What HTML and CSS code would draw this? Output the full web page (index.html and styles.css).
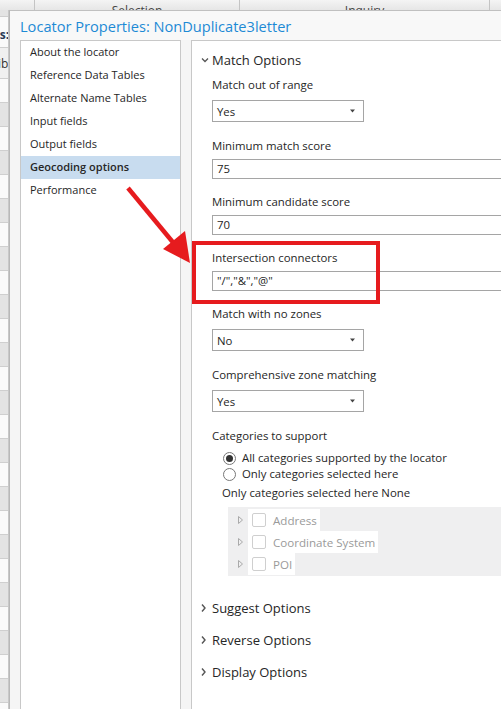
FILE: index.html
```html
<!DOCTYPE html>
<html>
<head>
<meta charset="utf-8">
<link rel="stylesheet" href="styles.css">
</head>
<body>
<div class="screen">
  <div class="topbar">
    <div class="th th-a"></div>
    <div class="th th-sel"><span>Selection</span></div>
    <div class="th th-inq"><span>Inquiry</span></div>
    <div class="th th-end"></div>
  </div>
  <div class="leftstrip">
    <div class="ls-cell ls-grey"></div>
    <div class="ls-cell ls-tall"><span class="ls-text">ls:</span></div>
    <div class="ls-cell ls-tall ls-light"><span class="ls-text2">ib</span></div>
    <div class="ls-rows"></div>
  </div>
  <div class="dialog">
    <div class="title">Locator Properties: NonDuplicate3letter</div>
    <div class="dlg-body">
      <nav class="nav">
        <div class="nav-item">About the locator</div>
        <div class="nav-item">Reference Data Tables</div>
        <div class="nav-item">Alternate Name Tables</div>
        <div class="nav-item">Input fields</div>
        <div class="nav-item">Output fields</div>
        <div class="nav-item active">Geocoding options</div>
        <div class="nav-item">Performance</div>
      </nav>
      <div class="panel">
        <div class="sec-head open">
          <svg class="chev-down" width="11" height="8" viewBox="0 0 11 8"><polyline points="1,2.5 4,5.5 7,2.5" fill="none" stroke="#555" stroke-width="1.3"/></svg>
          <span>Match Options</span>
        </div>
        <div class="fields">
          <div class="label">Match out of range</div>
          <div class="select"><span>Yes</span><svg width="6" height="4" viewBox="0 0 6 4"><polygon points="0,0.5 5,0.5 2.5,3.5" fill="#444"/></svg></div>

          <div class="label">Minimum match score</div>
          <div class="input">75</div>

          <div class="label">Minimum candidate score</div>
          <div class="input">70</div>

          <div class="label">Intersection connectors</div>
          <div class="input">"/","&amp;","@"</div>

          <div class="label">Match with no zones</div>
          <div class="select"><span>No</span><svg width="6" height="4" viewBox="0 0 6 4"><polygon points="0,0.5 5,0.5 2.5,3.5" fill="#444"/></svg></div>

          <div class="label">Comprehensive zone matching</div>
          <div class="select"><span>Yes</span><svg width="6" height="4" viewBox="0 0 6 4"><polygon points="0,0.5 5,0.5 2.5,3.5" fill="#444"/></svg></div>

          <div class="label">Categories to support</div>
          <div class="radios">
            <div class="radio-row"><span class="radio checked"></span><span>All categories supported by the locator</span></div>
            <div class="radio-row"><span class="radio"></span><span>Only categories selected here</span></div>
          </div>
          <div class="none-label">Only categories selected here None</div>
          <div class="tree">
            <div class="tree-row">
              <svg class="tri" width="20" height="10" viewBox="0 0 20 10"><polygon points="10.5,1.5 14.5,5 10.5,8.5" fill="none" stroke="#aaa" stroke-width="1"/></svg>
              <span class="tree-item"><span class="check"></span><span>Address</span></span>
            </div>
            <div class="tree-row">
              <svg class="tri" width="20" height="10" viewBox="0 0 20 10"><polygon points="10.5,1.5 14.5,5 10.5,8.5" fill="none" stroke="#aaa" stroke-width="1"/></svg>
              <span class="tree-item"><span class="check"></span><span>Coordinate System</span></span>
            </div>
            <div class="tree-row">
              <svg class="tri" width="20" height="10" viewBox="0 0 20 10"><polygon points="10.5,1.5 14.5,5 10.5,8.5" fill="none" stroke="#aaa" stroke-width="1"/></svg>
              <span class="tree-item"><span class="check"></span><span>POI</span></span>
            </div>
          </div>
        </div>
        <div class="collapsed">
          <div class="sec-head closed">
            <svg width="11" height="10" viewBox="0 0 11 10"><polyline points="1,1.5 4,5 1,8.5" fill="none" stroke="#555" stroke-width="1.4"/></svg>
            <span>Suggest Options</span>
          </div>
          <div class="sec-head closed">
            <svg width="11" height="10" viewBox="0 0 11 10"><polyline points="1,1.5 4,5 1,8.5" fill="none" stroke="#555" stroke-width="1.4"/></svg>
            <span>Reverse Options</span>
          </div>
          <div class="sec-head closed">
            <svg width="11" height="10" viewBox="0 0 11 10"><polyline points="1,1.5 4,5 1,8.5" fill="none" stroke="#555" stroke-width="1.4"/></svg>
            <span>Display Options</span>
          </div>
        </div>
      </div>
    </div>
  </div>
</div>
<svg class="annot" width="501" height="709" viewBox="0 0 501 709">
  <rect x="194" y="243" width="184" height="59" fill="none" stroke="#e61b1e" stroke-width="4"/>
  <line x1="128" y1="188" x2="176" y2="246" stroke="#e61b1e" stroke-width="4.5"/>
  <polygon points="163,249 185,231 190,263" fill="#e61b1e"/>
</svg>
</body>
</html>
```
FILE: styles.css
```css
* { box-sizing: border-box; }
html, body { margin: 0; padding: 0; }
body {
  width: 501px;
  height: 709px;
  overflow: hidden;
  background: #f3f3f3;
  font-family: "Open Sans", "Noto Sans", sans-serif;
  color: #262626;
  position: relative;
}
.screen {
  display: grid;
  grid-template-columns: 9px 492px;
  grid-template-rows: 10px 699px;
  height: 709px;
}
.topbar {
  grid-column: 1 / 3;
  display: flex;
  background: linear-gradient(#f4f4f4, #e6e6e6);
  overflow: hidden;
}
.th {
  border-right: 1px solid #c4c4c4;
  font-size: 12px;
  color: #444;
  overflow: hidden;
  display: flex;
  justify-content: center;
}
.th span { line-height: 12px; margin-top: 5px; }
.th-a { width: 35px; }
.th-sel { width: 205px; }
.th-inq { width: 250px; }
.th-end { flex: 1; border-right: none; }

.leftstrip {
  display: flex;
  flex-direction: column;
  background: #fafafa;
  border-right: 1px solid #c8c8c8;
  overflow: hidden;
}
.ls-cell { border-bottom: 1px solid #cfcfcf; }
.ls-grey { height: 7px; background: #e4e4e4; }
.ls-tall { height: 31px; }
.ls-light { background: #f0f0f0; }
.ls-text { font-size: 12px; font-weight: 700; color: #2a3a55; line-height: 36px; margin-left: -4px; display: block; }
.ls-text2 { font-size: 12px; color: #333; line-height: 31px; margin-left: -2px; display: block; }
.ls-rows {
  flex: 1;
  background: repeating-linear-gradient(#fafafa 0 23px, #cfcfcf 23px 24px, #e3e3e3 24px 47px, #cfcfcf 47px 48px);
}

.dialog {
  background: #f5f5f5;
  border-top: 1px solid #c0c0c0;
  border-left: 1px solid #b8b8b8;
  display: flex;
  flex-direction: column;
}
.title {
  height: 29px;
  line-height: 30px;
  padding-left: 10px;
  font-size: 14.6px;
  color: #1d8ad5;
  background: #f8f8f8;
  white-space: nowrap;
}
.dlg-body {
  flex: 1;
  display: flex;
  gap: 10px;
  padding-left: 10px;
}
.nav {
  width: 161px;
  background: #fff;
  border: 1px solid #c8c8c8;
  border-bottom: none;
}
.nav-item {
  height: 23px;
  line-height: 22px;
  padding-left: 9px;
  font-size: 11px;
  white-space: nowrap;
}
.nav-item.active { background: #c8dcef; font-weight: 600; }

.panel {
  flex: 1;
  background: #fff;
  border-top: 1px solid #c8c8c8;
  border-left: 1px solid #c8c8c8;
  padding: 8px 0 0 9px;
  overflow: hidden;
}
.sec-head {
  display: flex;
  align-items: center;
  font-size: 13px;
  white-space: nowrap;
}
.sec-head.open { height: 22px; }
.sec-head.closed { height: 32px; }
.sec-head svg { flex: none; }

.fields {
  padding-left: 11px;
  display: flex;
  flex-direction: column;
  align-items: flex-start;
}
.label {
  font-size: 11.4px;
  line-height: 16px;
  margin-top: 15px;
  white-space: nowrap;
}
.fields > .label:first-child { margin-top: 6px; }
.select {
  width: 152px;
  height: 22px;
  margin-top: 7px;
  margin-bottom: 1px;
  border: 1px solid #a5a5a5;
  background: #fff;
  display: flex;
  align-items: center;
  justify-content: space-between;
  padding: 0 7px 0 4px;
  font-size: 11.4px;
}
.input {
  width: 320px;
  height: 20px;
  margin-top: 5px;
  border: 1px solid #a5a5a5;
  background: #fff;
  padding-left: 4px;
  font-size: 11.4px;
  line-height: 18px;
  white-space: nowrap;
}
.radios {
  margin-top: 5px;
  padding-left: 11px;
}
.radio-row {
  display: flex;
  align-items: center;
  height: 16px;
  font-size: 11.4px;
  white-space: nowrap;
}
.radio {
  width: 13px;
  height: 13px;
  border: 1px solid #777;
  border-radius: 50%;
  background: #fff;
  margin-right: 6px;
  margin-top: 2px;
  display: flex;
  align-items: center;
  justify-content: center;
}
.radio.checked::after {
  content: "";
  width: 7px;
  height: 7px;
  border-radius: 50%;
  background: #333;
}
.none-label {
  margin-top: 4px;
  padding-left: 10px;
  font-size: 11.4px;
  line-height: 16px;
  white-space: nowrap;
}
.tree {
  margin-top: 6px;
  margin-left: 16px;
  width: 300px;
  background: #efeff0;
  padding: 2px 0 1px;
}
.tree-row {
  height: 22px;
  display: flex;
  align-items: stretch;
}
.tri { flex: none; align-self: center; }
.tree-item {
  display: flex;
  align-items: center;
  background: #fff;
  padding: 0 3px 0 4px;
  font-size: 11.6px;
  color: #9a9a9a;
  white-space: nowrap;
}
.check {
  width: 14px;
  height: 14px;
  border: 1px solid #cfcfcf;
  border-radius: 2px;
  background: #fff;
  margin-right: 7px;
}
.collapsed { margin-top: 16px; }

.annot {
  position: absolute;
  left: 0;
  top: 0;
  pointer-events: none;
}
```
